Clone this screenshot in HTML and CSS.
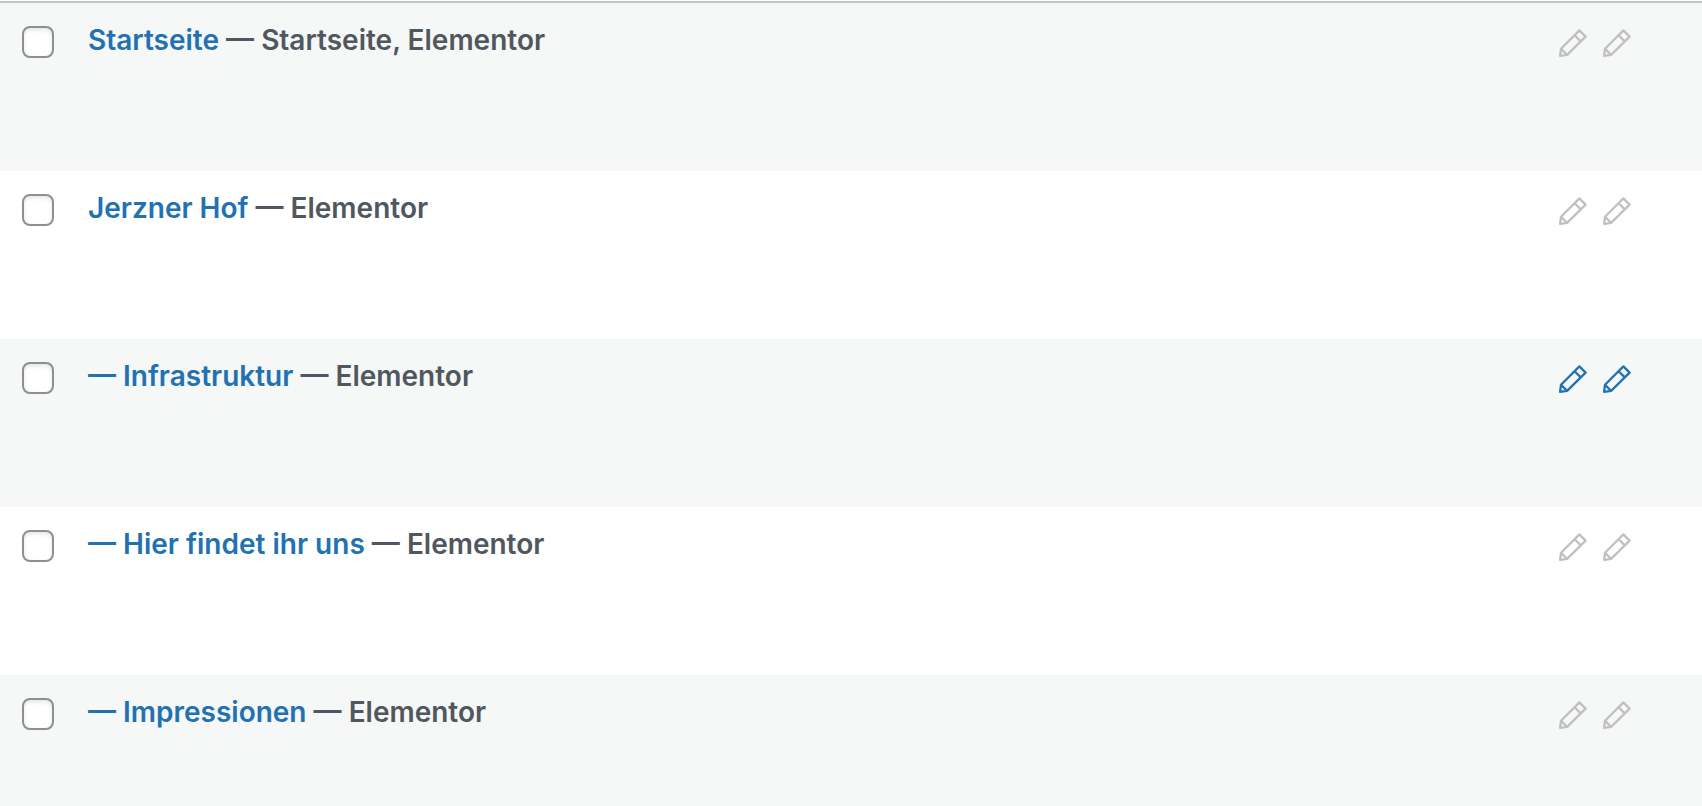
FILE: index.html
```html
<!DOCTYPE html>
<html lang="de">
<head>
    <meta charset="UTF-8">
    <meta name="viewport" content="width=device-width, initial-scale=1.0">
    <title>Seiten</title>
    <link rel="stylesheet" href="styles.css">
</head>
<body>
    <svg class="sprite" aria-hidden="true">
        <symbol id="pencil" viewBox="0 0 28 28">
            <path d="M20.4 1.4 L26.6 7.6 L8.1 25.9 L1.1 26.8 L2 19.8 Z M15.6 6.2 L21.8 12.4 M2 19.8 L8.1 25.9"/>
        </symbol>
    </svg>

    <table class="pages">
        <tbody>
            <tr>
                <td class="check-column"><input type="checkbox" aria-label="Startseite auswählen"></td>
                <td class="title-column"><a href="#startseite">Startseite</a> — Startseite, Elementor</td>
                <td class="edit-column">
                    <div class="edit-links">
                        <a href="#startseite-de" aria-label="Übersetzung bearbeiten"><svg><use href="#pencil"/></svg></a>
                        <a href="#startseite-en" aria-label="Übersetzung bearbeiten"><svg><use href="#pencil"/></svg></a>
                    </div>
                </td>
            </tr>
            <tr>
                <td class="check-column"><input type="checkbox" aria-label="Jerzner Hof auswählen"></td>
                <td class="title-column"><a href="#jerzner-hof">Jerzner Hof</a> — Elementor</td>
                <td class="edit-column">
                    <div class="edit-links">
                        <a href="#jerzner-hof-de" aria-label="Übersetzung bearbeiten"><svg><use href="#pencil"/></svg></a>
                        <a href="#jerzner-hof-en" aria-label="Übersetzung bearbeiten"><svg><use href="#pencil"/></svg></a>
                    </div>
                </td>
            </tr>
            <tr>
                <td class="check-column"><input type="checkbox" aria-label="Infrastruktur auswählen"></td>
                <td class="title-column"><a href="#infrastruktur">— Infrastruktur</a> — Elementor</td>
                <td class="edit-column">
                    <div class="edit-links active">
                        <a href="#infrastruktur-de" aria-label="Übersetzung bearbeiten"><svg><use href="#pencil"/></svg></a>
                        <a href="#infrastruktur-en" aria-label="Übersetzung bearbeiten"><svg><use href="#pencil"/></svg></a>
                    </div>
                </td>
            </tr>
            <tr>
                <td class="check-column"><input type="checkbox" aria-label="Hier findet ihr uns auswählen"></td>
                <td class="title-column"><a href="#hier-findet-ihr-uns">— Hier findet ihr uns</a> — Elementor</td>
                <td class="edit-column">
                    <div class="edit-links">
                        <a href="#anfahrt-de" aria-label="Übersetzung bearbeiten"><svg><use href="#pencil"/></svg></a>
                        <a href="#anfahrt-en" aria-label="Übersetzung bearbeiten"><svg><use href="#pencil"/></svg></a>
                    </div>
                </td>
            </tr>
            <tr>
                <td class="check-column"><input type="checkbox" aria-label="Impressionen auswählen"></td>
                <td class="title-column"><a href="#impressionen">— Impressionen</a> — Elementor</td>
                <td class="edit-column">
                    <div class="edit-links">
                        <a href="#impressionen-de" aria-label="Übersetzung bearbeiten"><svg><use href="#pencil"/></svg></a>
                        <a href="#impressionen-en" aria-label="Übersetzung bearbeiten"><svg><use href="#pencil"/></svg></a>
                    </div>
                </td>
            </tr>
        </tbody>
    </table>
</body>
</html>
```

FILE: styles.css
```css
html {
    overflow: hidden;
}
body {
    margin: 0;
    padding-top: 1px;
    background-color: #fff;
    color: #50575e;
    font-family: Inter, sans-serif;
}
.sprite {
    display: none;
}
.pages {
    width: 100%;
    border-spacing: 0;
    border-top: 2px solid #c3c4c7;
}
.pages tr {
    height: 168px;
}
.pages tr:nth-child(odd) {
    background-color: #f6f7f7;
}
.pages td {
    padding: 0;
    vertical-align: top;
}
.pages a {
    color: #2271b1;
    text-decoration: none;
}
.pages .check-column {
    width: 66px;
    padding: 23px 0 0 22px;
}
.check-column input {
    display: block;
    appearance: none;
    width: 32px;
    height: 32px;
    margin: 0;
    border: 2px solid #8c8f94;
    border-radius: 8px;
    background-color: #fff;
    box-shadow: inset 0 2px 4px rgba(0, 0, 0, 0.1);
}
.pages .title-column {
    padding-top: 17px;
    font-size: 28px;
    font-weight: 600;
    line-height: 40px;
}
.pages .edit-column {
    width: 72px;
    padding: 26px 71px 0 0;
}
.edit-links {
    display: flex;
    gap: 16px;
}
.pages .edit-links a {
    color: #c0c0c0;
}
.pages .edit-links.active a {
    color: #2271b1;
}
.edit-links svg {
    display: block;
    width: 28px;
    height: 28px;
    fill: none;
    stroke: currentColor;
    stroke-width: 2.3;
    stroke-linejoin: round;
}
```
